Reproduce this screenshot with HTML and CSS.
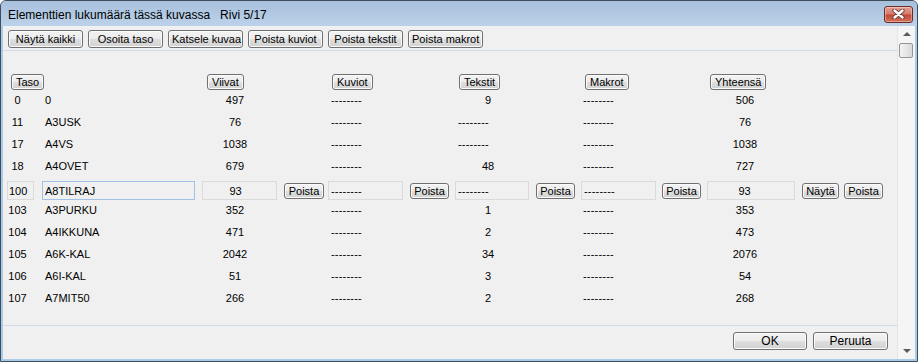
FILE: index.html
```html
<!DOCTYPE html>
<html lang="fi">
<head>
    <meta charset="UTF-8">
    <title>Elementtien lukumäärä tässä kuvassa</title>
    <link rel="stylesheet" href="styles.css">
</head>
<body>
<div class="window">
    <div class="titlebar">
        <span class="title">Elementtien lukumäärä tässä kuvassa   Rivi 5/17</span>
        <button class="close" type="button" aria-label="Sulje">
            <svg width="13" height="10" viewBox="0 0 13 10">
                <path d="M2.5 1.5 L10.5 8.5 M10.5 1.5 L2.5 8.5" stroke="#6a3a34" stroke-width="4.2" stroke-linecap="round"/>
                <path d="M2.5 1.5 L10.5 8.5 M10.5 1.5 L2.5 8.5" stroke="#fff" stroke-width="2.4" stroke-linecap="round"/>
            </svg>
        </button>
    </div>
    <div class="client">
        <div class="main">
            <div class="toolbar">
                <button class="btn tool">Näytä kaikki</button>
                <button class="btn tool">Osoita taso</button>
                <button class="btn tool">Katsele kuvaa</button>
                <button class="btn tool">Poista kuviot</button>
                <button class="btn tool">Poista tekstit</button>
                <button class="btn tool">Poista makrot</button>
            </div>

            <div class="table">
                <div class="grid head">
                    <button class="btn hd c-taso">Taso</button>
                    <button class="btn hd c-v hd-v">Viivat</button>
                    <button class="btn hd c-k">Kuviot</button>
                    <button class="btn hd c-t">Tekstit</button>
                    <button class="btn hd c-m">Makrot</button>
                    <button class="btn hd c-y hd-y">Yhteensä</button>
                </div>

                <div class="grid row">
                    <span class="c-taso taso">0</span><span class="c-name name">0</span>
                    <span class="c-v num">497</span><span class="c-k dash">--------</span>
                    <span class="c-t num">9</span><span class="c-m dash">--------</span>
                    <span class="c-y num wide">506</span>
                </div>
                <div class="grid row">
                    <span class="c-taso taso">11</span><span class="c-name name">A3USK</span>
                    <span class="c-v num">76</span><span class="c-k dash">--------</span>
                    <span class="c-t dash">--------</span><span class="c-m dash">--------</span>
                    <span class="c-y num wide">76</span>
                </div>
                <div class="grid row">
                    <span class="c-taso taso">17</span><span class="c-name name">A4VS</span>
                    <span class="c-v num">1038</span><span class="c-k dash">--------</span>
                    <span class="c-t dash">--------</span><span class="c-m dash">--------</span>
                    <span class="c-y num wide">1038</span>
                </div>
                <div class="grid row">
                    <span class="c-taso taso">18</span><span class="c-name name">A4OVET</span>
                    <span class="c-v num">679</span><span class="c-k dash">--------</span>
                    <span class="c-t num">48</span><span class="c-m dash">--------</span>
                    <span class="c-y num wide">727</span>
                </div>

                <div class="grid row edit">
                    <input class="box in-taso" value="100" readonly>
                    <input class="box in-name" value="A8TILRAJ" readonly>
                    <input class="box in-num" value="93" readonly>
                    <button class="btn small w40">Poista</button>
                    <input class="box in-dash" value="--------" readonly>
                    <button class="btn small">Poista</button>
                    <input class="box in-dash w74" value="--------" readonly>
                    <button class="btn small">Poista</button>
                    <input class="box in-dash" value="--------" readonly>
                    <button class="btn small">Poista</button>
                    <input class="box in-num in-yht" value="93" readonly>
                    <button class="btn small w37">Näytä</button>
                    <button class="btn small">Poista</button>
                </div>

                <div class="grid row">
                    <span class="c-taso taso">103</span><span class="c-name name">A3PURKU</span>
                    <span class="c-v num">352</span><span class="c-k dash">--------</span>
                    <span class="c-t num">1</span><span class="c-m dash">--------</span>
                    <span class="c-y num wide">353</span>
                </div>
                <div class="grid row">
                    <span class="c-taso taso">104</span><span class="c-name name">A4IKKUNA</span>
                    <span class="c-v num">471</span><span class="c-k dash">--------</span>
                    <span class="c-t num">2</span><span class="c-m dash">--------</span>
                    <span class="c-y num wide">473</span>
                </div>
                <div class="grid row">
                    <span class="c-taso taso">105</span><span class="c-name name">A6K-KAL</span>
                    <span class="c-v num">2042</span><span class="c-k dash">--------</span>
                    <span class="c-t num">34</span><span class="c-m dash">--------</span>
                    <span class="c-y num wide">2076</span>
                </div>
                <div class="grid row">
                    <span class="c-taso taso">106</span><span class="c-name name">A6I-KAL</span>
                    <span class="c-v num">51</span><span class="c-k dash">--------</span>
                    <span class="c-t num">3</span><span class="c-m dash">--------</span>
                    <span class="c-y num wide">54</span>
                </div>
                <div class="grid row">
                    <span class="c-taso taso">107</span><span class="c-name name">A7MIT50</span>
                    <span class="c-v num">266</span><span class="c-k dash">--------</span>
                    <span class="c-t num">2</span><span class="c-m dash">--------</span>
                    <span class="c-y num wide">268</span>
                </div>
            </div>

            <div class="footer">
                <button class="btn foot ok">OK</button>
                <button class="btn foot">Peruuta</button>
            </div>
        </div>
        <div class="scrollbar">
            <div class="arrow"><span class="tri up"></span></div>
            <div class="thumb"></div>
            <div class="track"></div>
            <div class="arrow"><span class="tri down"></span></div>
        </div>
    </div>
</div>
</body>
</html>
```

FILE: styles.css
```css
* { box-sizing: border-box; }
body { margin: 0; font-family: "Liberation Sans", Arial, sans-serif; font-size: 11px; color: #000; background: #fff; }

.window { width: 918px; height: 362px; border: 1px solid #3e4c5c; border-radius: 6px 6px 0 0; background: #a9cbea; display: flex; flex-direction: column; overflow: hidden; }
.titlebar { height: 25px; flex: none; display: flex; align-items: center; justify-content: space-between; padding: 0 4px 0 7px; background: linear-gradient(#a7c0dc, #bcd2ea); }
.title { font-size: 12px; white-space: pre; margin-top: 2px; }
.close { width: 29px; height: 17px; padding: 0; margin-top: 1px; border: 1px solid #6b2c24; border-radius: 3px; display: flex; align-items: center; justify-content: center;
    background: linear-gradient(#e6a296, #d67b6c 45%, #c24a37 55%, #d4735a); box-shadow: inset 0 0 0 1px rgba(255,255,255,0.35); }

.client { flex: 1; display: flex; min-height: 0; margin: 0 2px 2px; background: #f0f0f0; }
.main { flex: 1; display: flex; flex-direction: column; }

.btn { font-family: inherit; font-size: 11px; color: #000; padding: 0 3px; border: 1px solid #707070; border-radius: 3px; white-space: nowrap;
    background: linear-gradient(#f3f3f3 0%, #ececec 48%, #dedede 52%, #d2d2d2 100%); box-shadow: inset 0 0 0 1px #fbfbfb; }

.toolbar { height: 25px; flex: none; display: flex; gap: 5px; padding: 4px 0 0 5px; border-bottom: 1px solid #cfdbe6; }
.tool { width: 75px; height: 18px; }

.table { padding: 23px 0 0 4px; }
.grid { display: grid; grid-template-columns: 35px 160px 82px 44px 82px 45px 81px 45px 81px 45px 95px 42px 40px; }
.head { height: 15px; align-items: start; }
.hd { height: 16px; margin-left: 4px; justify-self: start; padding: 0 4px; }
.hd-v { margin-left: 5px; }
.hd-y { margin-left: 3px; }

.row { height: 22px; align-items: center; }
.c-taso { grid-column: 1; }
.c-name { grid-column: 2; }
.c-v { grid-column: 3; }
.c-k { grid-column: 5; }
.c-t { grid-column: 7; }
.c-m { grid-column: 9; }
.c-y { grid-column: 11; }

.taso { width: 21px; text-align: center; }
.name { padding-left: 3px; }
.num { margin-left: 3px; width: 60px; text-align: center; }
.num.wide { width: 70px; }
.dash { padding-left: 3px; letter-spacing: 0.2px; }
.c-m.dash { padding-left: 2px; }

.edit { align-items: start; }
.box { font-family: inherit; font-size: 11px; color: #000; height: 19px; margin-top: 4px; padding: 0 2px; border: 1px solid #dadada; background: #f0f0f0; outline: none; }
.in-taso { width: 27px; padding-left: 1px; }
.in-name { width: 153px; border-color: #9fc2e6; }
.in-num { width: 75px; text-align: center; padding: 0 11px 0 3px; }
.in-yht { width: 88px; padding: 0 15px 0 2px; }
.in-dash { width: 75px; letter-spacing: 0.2px; }
.w74 { width: 74px; }
.small { width: 39px; height: 16px; margin-top: 6px; padding: 0 2px; }
.w40 { width: 40px; }
.w37 { width: 37px; }

.footer { margin-top: auto; height: 34px; flex: none; display: flex; justify-content: flex-end; gap: 6px; padding: 6px 9px 0 0; border-top: 1px solid #cfdbe6; }
.foot { width: 75px; height: 18px; font-size: 12px; }
.ok { width: 74px; }

.scrollbar { width: 18px; flex: none; display: flex; flex-direction: column; background: #f5f5f5; border-left: 1px solid #e6e6e6; }
.arrow { height: 17px; flex: none; display: flex; align-items: center; justify-content: center; }
.tri { width: 0; height: 0; border-left: 4px solid transparent; border-right: 4px solid transparent; }
.tri.up { border-bottom: 4px solid #5a5a5a; margin-top: -2px; }
.tri.down { border-top: 4px solid #5a5a5a; margin-top: 1px; }
.thumb { height: 15px; flex: none; margin: 0 2px 0 1px; border: 1px solid #969696; border-radius: 2px; background: linear-gradient(90deg, #f4f4f4, #e6e6e6 50%, #d9d9d9); }
.track { flex: 1; }
```
